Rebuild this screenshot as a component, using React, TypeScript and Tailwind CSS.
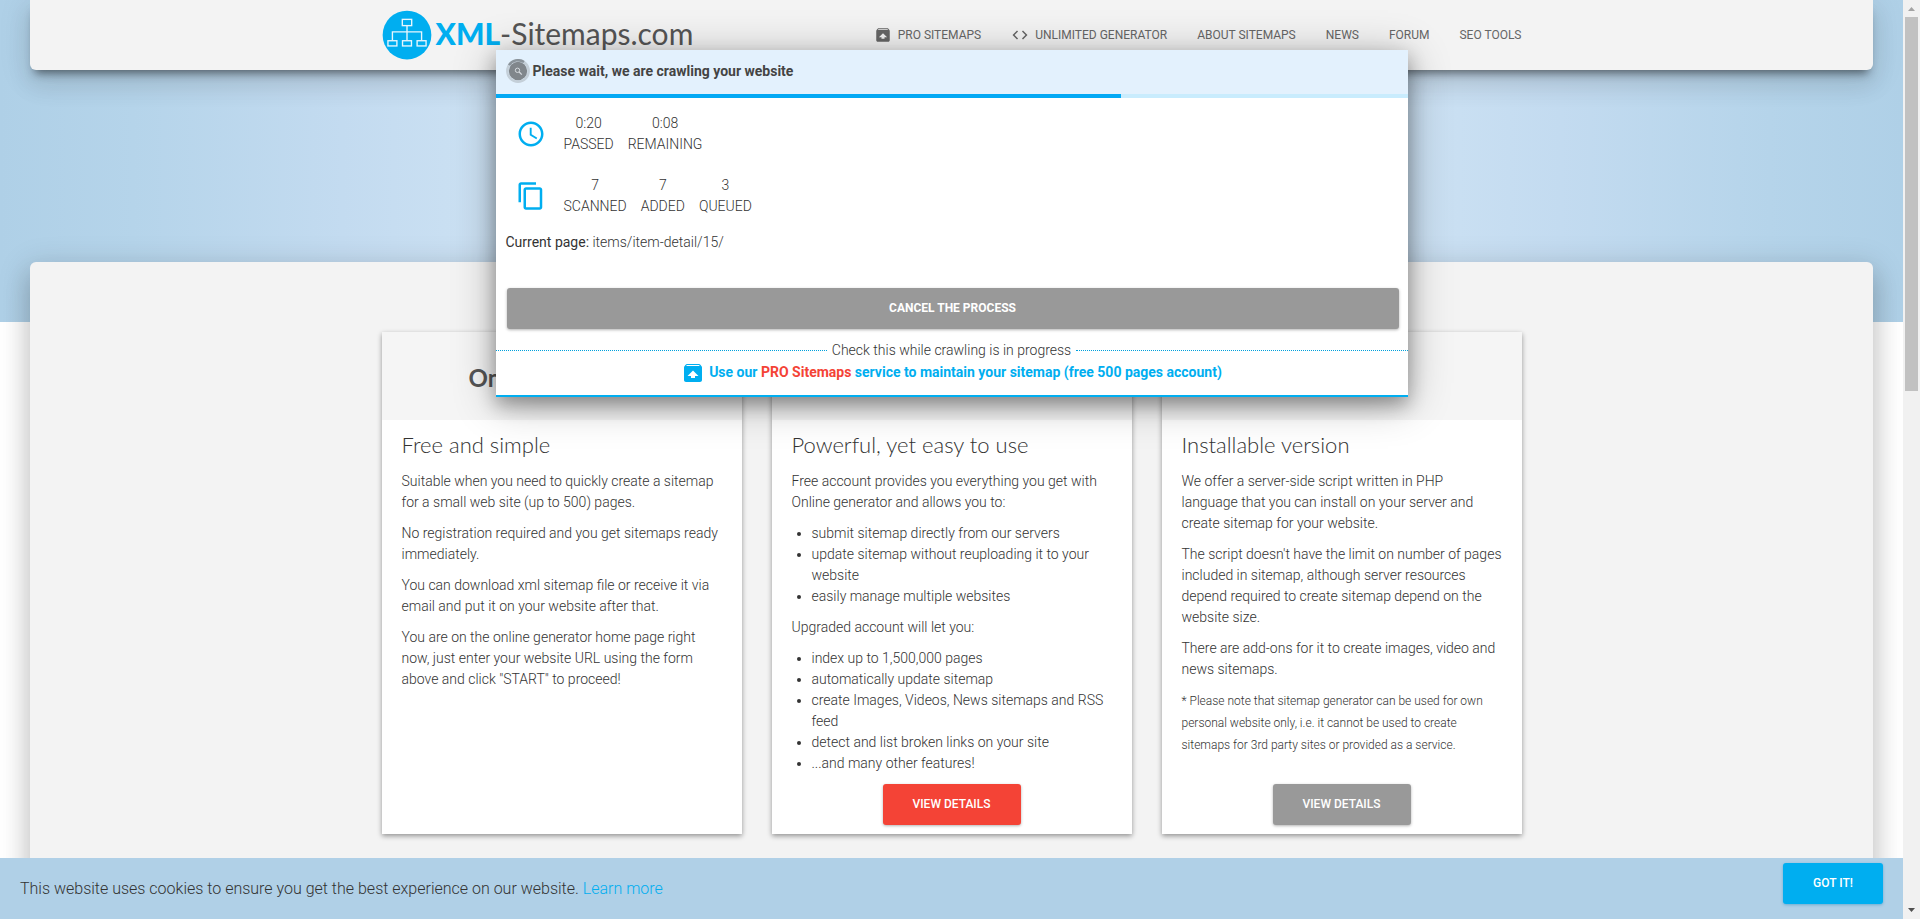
import React from "react";

const UNARCHIVE =
  "M20.55 5.22l-1.39-1.68C18.88 3.21 18.47 3 18 3H6c-.47 0-.88.21-1.15.55L3.46 5.22C3.17 5.57 3 6.01 3 6.5V19c0 1.1.89 2 2 2h14c1.1 0 2-.9 2-2V6.5c0-.49-.17-.93-.45-1.28zM12 9.5l5.5 5.5H14v2h-4v-2H6.5L12 9.5zM5.12 5l.82-1h12l.93 1H5.12z";
const CODE =
  "M9.4 16.6L4.8 12l4.6-4.6L8 6l-6 6 6 6 1.4-1.4zm5.2 0l4.6-4.6-4.6-4.6L16 6l6 6-6 6-1.4-1.4z";
const CLOCK =
  "M11.99 2C6.47 2 2 6.48 2 12s4.47 10 9.99 10C17.52 22 22 17.52 22 12S17.52 2 11.99 2zM12 20c-4.42 0-8-3.58-8-8s3.58-8 8-8 8 3.58 8 8-3.58 8-8 8zm.5-13H11v6l5.25 3.15.75-1.23-4.5-2.67z";
const COPY =
  "M16 1H4c-1.1 0-2 .9-2 2v14h2V3h12V1zm3 4H8c-1.1 0-2 .9-2 2v14c0 1.1.9 2 2 2h11c1.1 0 2-.9 2-2V7c0-1.1-.9-2-2-2zm0 16H8V7h11v14z";

function Icon({ d, className }: { d: string; className: string }) {
  return (
    <svg viewBox="0 0 24 24" fill="currentColor" className={className} aria-hidden="true">
      <path d={d} />
    </svg>
  );
}

const NAV: { label: string; icon?: string }[] = [
  { label: "PRO SITEMAPS", icon: UNARCHIVE },
  { label: "UNLIMITED GENERATOR", icon: CODE },
  { label: "ABOUT SITEMAPS" },
  { label: "NEWS" },
  { label: "FORUM" },
  { label: "SEO TOOLS" },
];

function Logo() {
  return (
    <a href="#" className="flex items-center gap-1 font-[Lato,sans-serif] text-[30px] leading-9 text-[#555]">
      <svg viewBox="0 0 48 48" className="size-[50px]" aria-hidden="true">
        <circle cx="24" cy="24" r="23.4" fill="#00aef0" />
        <g fill="none" stroke="#e8f6fd" strokeWidth="1.3">
          <rect x="19.5" y="9" width="9" height="6" />
          <path d="M24 15v14M10 29v-8h28v8" />
          <rect x="5.7" y="29.5" width="8.6" height="5" />
          <rect x="19.7" y="29.5" width="8.6" height="5" />
          <rect x="33.7" y="29.5" width="8.6" height="5" />
        </g>
      </svg>
      <span className="pb-1">
        <b className="font-black text-[#00aef0]">XML</b>-Sitemaps.com
      </span>
    </a>
  );
}

function Header() {
  return (
    <header className="mx-[30px] h-[70px] rounded-b-md bg-[#f3f3f3] shadow-[0_16px_24px_2px_rgba(0,0,0,0.07),0_6px_30px_5px_rgba(0,0,0,0.08),0_8px_10px_-5px_rgba(0,0,0,0.5)]">
      <div className="mx-auto flex h-full max-w-[1140px] items-center justify-between">
        <Logo />
        <nav className="flex gap-[30px] text-xs text-[#666]">
          {NAV.map((n) => (
            <a key={n.label} href="#" className="flex items-center gap-[6px]">
              {n.icon && <Icon d={n.icon} className="size-[18px]" />}
              {n.label}
            </a>
          ))}
        </nav>
      </div>
    </header>
  );
}

function Card({
  title,
  heading,
  children,
  action,
}: {
  title?: string;
  heading: string;
  children: React.ReactNode;
  action?: string;
}) {
  return (
    <article className="flex flex-1 flex-col bg-white shadow-[0_2px_5px_0_rgba(0,0,0,0.4)]">
      <div className="flex h-[88px] items-center justify-center bg-[#f5f5f5]">
        {title && <h2 className="pt-1 font-[Lato,sans-serif] text-2xl font-bold text-[#555]">{title}</h2>}
      </div>
      <div className="flex flex-1 flex-col gap-[10px] px-5 pt-[10px] pb-[9px] text-sm leading-[21px] font-light text-[#333]">
        <h3 className="pb-[2px] font-[Lato,sans-serif] text-[22px] leading-[29px] font-light">{heading}</h3>
        {children}
        {action && (
          <button
            type="button"
            className={
              "mx-auto mt-auto h-[41px] w-[138px] rounded-[3px] pb-[2px] text-xs font-medium text-white shadow-[0_1px_3px_rgba(0,0,0,0.3)] " +
              action
            }
          >
            VIEW DETAILS
          </button>
        )}
      </div>
    </article>
  );
}

function Stat({ value, label }: { value: string; label: string }) {
  return (
    <div className="flex flex-col text-center">
      <span>{value}</span>
      <span>{label}</span>
    </div>
  );
}

function Spinner() {
  return (
    <svg viewBox="0 0 24 24" className="size-6" aria-hidden="true">
      <circle cx="12" cy="12" r="10.7" fill="none" stroke="#c4cfd8" strokeWidth="2.4" />
      <path d="M3 6.2A10.7 10.7 0 0 1 18 3" fill="none" stroke="#8b949b" strokeWidth="2.4" />
      <circle cx="12" cy="12" r="9.2" fill="#80868b" />
      <circle cx="11.5" cy="11.3" r="2.2" fill="none" stroke="#d5dade" strokeWidth="1" />
      <path d="M13.2 13l2.6 2.6" stroke="#d5dade" strokeWidth="1.3" />
    </svg>
  );
}

function CrawlDialog() {
  return (
    <section
      role="dialog"
      aria-label="Crawling progress"
      className="absolute top-[50px] left-1/2 w-[912px] -translate-x-1/2 border-b-2 border-[#00aef0] bg-white text-sm leading-[21px] font-light text-[#333] shadow-[0_8px_17px_0_rgba(0,0,0,0.3),0_6px_40px_0_rgba(0,0,0,0.3)]"
    >
      <div className="flex h-11 items-center gap-[3px] bg-[#e3f1fd] px-[10px] pb-[2px] font-bold text-[#444]">
        <Spinner />
        Please wait, we are crawling your website
      </div>
      <div className="h-1 bg-[#c9ecfd]">
        <div className="h-full w-[68.6%] bg-[#03a9f4]" />
      </div>
      <div className="flex items-center gap-[18px] px-5 pt-[15px]">
        <Icon d={CLOCK} className="size-[30px] text-[#00aef0]" />
        <div className="flex gap-[14px]">
          <Stat value="0:20" label="PASSED" />
          <Stat value="0:08" label="REMAINING" />
        </div>
      </div>
      <div className="flex items-center gap-[18px] px-5 pt-5">
        <Icon d={COPY} className="size-[30px] text-[#00aef0]" />
        <div className="flex gap-[14px]">
          <Stat value="7" label="SCANNED" />
          <Stat value="7" label="ADDED" />
          <Stat value="3" label="QUEUED" />
        </div>
      </div>
      <p className="px-[10px] pt-[15px]">
        <span className="font-normal">Current page:</span> items/item-detail/15/
      </p>
      <div className="pt-[35px] pr-[9px] pl-[11px]">
        <button
          type="button"
          className="h-[41px] w-full rounded-[3px] bg-[#999] pb-[2px] text-xs font-bold text-white shadow-[0_1px_3px_rgba(0,0,0,0.3)]"
        >
          CANCEL THE PROCESS
        </button>
      </div>
      <div className="flex items-center gap-[5px] pt-[11px]">
        <span className="flex-1 border-t border-dotted border-[#00a0dc]" />
        Check this while crawling is in progress
        <span className="flex-1 border-t border-dotted border-[#00a0dc]" />
      </div>
      <a href="#" className="flex items-center justify-center gap-1 pb-[10px] font-bold text-[#00aef0]">
        <Icon d={UNARCHIVE} className="size-6" />
        <span className="pb-[2px]">
          Use our <span className="text-[#f44336]">PRO Sitemaps</span> service to maintain your sitemap (free 500 pages
          account)
        </span>
      </a>
    </section>
  );
}

function CookieBar() {
  return (
    <footer className="absolute inset-x-0 bottom-0 flex h-[61px] items-start justify-between bg-[#b0d0e7] px-5 pt-[5px]">
      <p className="pt-[14px] text-base font-light text-[#333]">
        This website uses cookies to ensure you get the best experience on our website.{" "}
        <a href="#" className="text-[#00aef0]">
          Learn more
        </a>
      </p>
      <button
        type="button"
        className="h-[41px] w-[100px] rounded-[3px] bg-[#00aef0] pb-[2px] text-xs font-medium text-white shadow-[0_1px_3px_rgba(0,120,180,0.4)]"
      >
        GOT IT!
      </button>
    </footer>
  );
}

function Scrollbar() {
  return (
    <div className="flex w-[17px] flex-col items-center bg-[#f1f1f1]" aria-hidden="true">
      <svg viewBox="0 0 17 17" className="size-[17px]">
        <path d="M5 11h7L8.5 7z" fill="#a3a3a3" />
      </svg>
      <div className="h-[40.7%] w-[13px] bg-[#c1c1c1]" />
      <svg viewBox="0 0 17 17" className="mt-auto size-[17px]">
        <path d="M5 6h7L8.5 10z" fill="#505050" />
      </svg>
    </div>
  );
}

export default function App() {
  return (
    <div className="flex h-screen overflow-hidden bg-white font-[Roboto,sans-serif]">
      <div className="relative flex-1 overflow-hidden">
        <div className="h-[262px]">
          <div className="h-[322px] bg-[linear-gradient(90deg,#afd0e7_0%,#b5d4ea_7%,#c3dbf0_18%,#cce1f3_26%,#d8eaf8_50%,#cce1f3_74%,#c3dbf0_82%,#b5d4ea_93%,#afd0e7_100%)]">
            <Header />
          </div>
        </div>
        <main className="relative mx-[30px] min-h-full rounded-t-md bg-[#f3f3f3] pt-[70px] shadow-[0_16px_24px_2px_rgba(0,0,0,0.14),0_6px_30px_5px_rgba(0,0,0,0.12)]">
          <div className="mx-auto flex min-h-[502px] max-w-[1140px] gap-[30px]">
            <Card title="Online Generator" heading="Free and simple">
              <p>Suitable when you need to quickly create a sitemap for a small web site (up to 500) pages.</p>
              <p>No registration required and you get sitemaps ready immediately.</p>
              <p>You can download xml sitemap file or receive it via email and put it on your website after that.</p>
              <p>
                You are on the online generator home page right now, just enter your website URL using the form above
                and click "START" to proceed!
              </p>
            </Card>
            <Card heading="Powerful, yet easy to use" action="bg-[#f44336]">
              <p>Free account provides you everything you get with Online generator and allows you to:</p>
              <ul className="list-disc pl-5">
                <li>submit sitemap directly from our servers</li>
                <li>update sitemap without reuploading it to your website</li>
                <li>easily manage multiple websites</li>
              </ul>
              <p>Upgraded account will let you:</p>
              <ul className="list-disc pl-5">
                <li>index up to 1,500,000 pages</li>
                <li>automatically update sitemap</li>
                <li>create Images, Videos, News sitemaps and RSS feed</li>
                <li>detect and list broken links on your site</li>
                <li>...and many other features!</li>
              </ul>
            </Card>
            <Card heading="Installable version" action="bg-[#999]">
              <p>
                We offer a server-side script written in PHP language that you can install on your server and create
                sitemap for your website.
              </p>
              <p>
                The script doesn't have the limit on number of pages included in sitemap, although server resources
                depend required to create sitemap depend on the website size.
              </p>
              <p>There are add-ons for it to create images, video and news sitemaps.</p>
              <p className="text-xs leading-[22px]">
                * Please note that sitemap generator can be used for own personal website only, i.e. it cannot be used
                to create sitemaps for 3rd party sites or provided as a service.
              </p>
            </Card>
          </div>
        </main>
        <CrawlDialog />
        <CookieBar />
      </div>
      <Scrollbar />
    </div>
  );
}
